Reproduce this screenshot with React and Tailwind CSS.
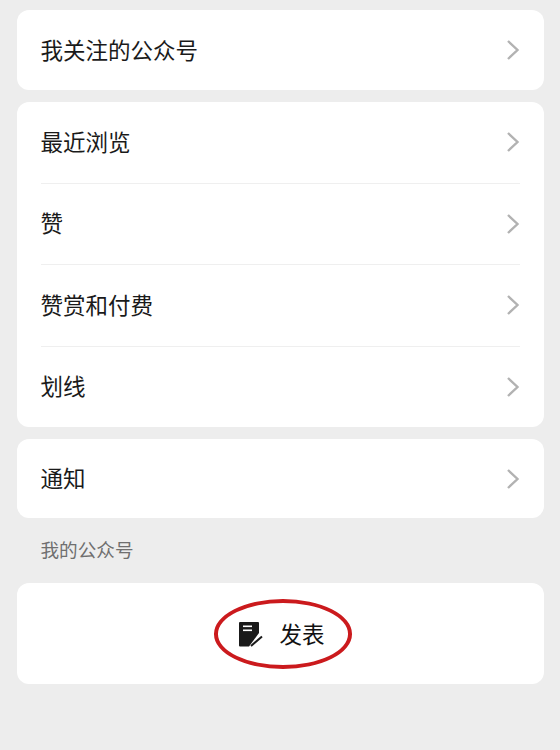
import React from "react";

const font = "font-['Noto_Sans_CJK_SC','Noto_Sans',sans-serif]";

function Chevron() {
    return (
        <svg width="14" height="22" viewBox="0 0 14 22" fill="none" className="shrink-0">
            <path d="M2 2 L11.5 11 L2 20" stroke="#b2b2b2" strokeWidth="2.4" />
        </svg>
    );
}

function Row({ title, line }) {
    return (
        <div className="pl-[23.5px] pr-[24px]">
            <div className={"flex items-center justify-between " + (line ? "h-[81.5px] border-b border-[#efefef]" : "h-[80.5px]")}>
                <span className="text-[22.5px] text-[#1a1a1a] mb-[1px]">{title}</span>
                <Chevron />
            </div>
        </div>
    );
}

function PublishIcon() {
    return (
        <svg width="24" height="25" viewBox="0 0 24 25" className="shrink-0">
            <path d="M1 0 H19 a1 1 0 0 1 1 1 V11 L10 24.5 H1 a1 1 0 0 1 -1 -1 V1 a1 1 0 0 1 1 -1 Z" fill="#1a1a1a" />
            <rect x="4" y="3.5" width="9" height="1.6" fill="#fff" />
            <rect x="4" y="7.5" width="9" height="1.6" fill="#fff" />
            <path d="M12 24 L23 14.5" stroke="#1a1a1a" strokeWidth="2" />
        </svg>
    );
}

export default function App() {
    return (
        <div className={"w-[560px] h-[750px] bg-[#ededed] overflow-hidden pt-[10px] px-[17px] " + font}>
            <div className="w-[527px] bg-white rounded-[12px]">
                <div className="pl-[23.5px] pr-[24px] flex items-center justify-between h-[80px]">
                    <span className="text-[22.5px] text-[#1a1a1a] mb-[1px]">我关注的公众号</span>
                    <Chevron />
                </div>
            </div>
            <div className="w-[527px] bg-white rounded-[12px] mt-[12px]">
                <Row title="最近浏览" line />
                <Row title="赞" line />
                <Row title="赞赏和付费" line />
                <Row title="划线" />
            </div>
            <div className="w-[527px] bg-white rounded-[12px] mt-[12px]">
                <div className="pl-[23.5px] pr-[24px] flex items-center justify-between h-[79px]">
                    <span className="text-[22.5px] text-[#1a1a1a] mb-[1px]">通知</span>
                    <Chevron />
                </div>
            </div>
            <div className="pl-[23.5px] h-[65px] pt-[18px] text-[18.6px] leading-[26px] text-[#6f6f6f]">我的公众号</div>
            <div className="w-[527px] h-[101px] bg-white rounded-[12px] relative flex items-center justify-center">
                <div className="flex items-center gap-[16px] ml-[3px] mt-[1px]">
                    <PublishIcon />
                    <span className="text-[22.5px] text-[#111111]">发表</span>
                </div>
                <div className="absolute left-[196.5px] top-[16px] w-[138.5px] h-[70px] rounded-[50%] border-[4px] border-[#cb1a1d]"></div>
            </div>
        </div>
    );
}
